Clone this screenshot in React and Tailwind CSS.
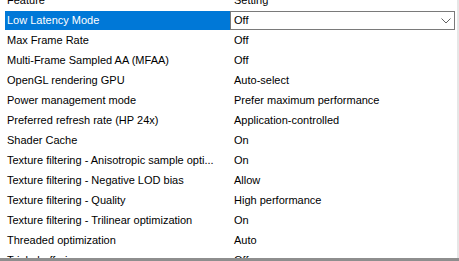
import React from "react";

const rows = [
  ["Max Frame Rate", "Off"],
  ["Multi-Frame Sampled AA (MFAA)", "Off"],
  ["OpenGL rendering GPU", "Auto-select"],
  ["Power management mode", "Prefer maximum performance"],
  ["Preferred refresh rate (HP 24x)", "Application-controlled"],
  ["Shader Cache", "On"],
  ["Texture filtering - Anisotropic sample opti...", "On"],
  ["Texture filtering - Negative LOD bias", "Allow"],
  ["Texture filtering - Quality", "High performance"],
  ["Texture filtering - Trilinear optimization", "On"],
  ["Threaded optimization", "Auto"],
  ["Triple buffering", "Off"],
];

export default function App() {
  return (
    <div
      className="relative w-[459px] h-[261px] overflow-hidden bg-white text-[11px] text-black"
      style={{ fontFamily: '"Liberation Sans", Arial, sans-serif' }}
    >
      <div className="flex h-[258px]">
        <div className="flex flex-col w-[457px] -mt-[10px] overflow-hidden">
          <div className="flex h-[20px] items-center shrink-0">
            <div className="w-[229px] pl-[7px]">Feature</div>
            <div className="pl-[5px]">Setting</div>
          </div>
          <div className="flex h-[19px] shrink-0 mt-[1px]">
            <div className="w-[225px] ml-[5px] bg-[#0078d7] text-white flex items-center pl-[2px]">
              Low Latency Mode
            </div>
            <div className="flex-1 mr-[2px] border border-[#7a7a7a] flex items-center justify-between pl-[3px] pr-[3px]">
              <span>Off</span>
              <svg width="10" height="6" viewBox="0 0 10 6" fill="none">
                <path d="M0.5 0.5 L5 5 L9.5 0.5" stroke="#606060" strokeWidth="1" />
              </svg>
            </div>
          </div>
          {rows.map(([f, s]) => (
            <div key={f} className="flex h-[20px] items-center shrink-0">
              <div className="w-[229px] pl-[7px] whitespace-nowrap overflow-hidden">{f}</div>
              <div className="pl-[5px] whitespace-nowrap">{s}</div>
            </div>
          ))}
        </div>
        <div className="w-[2px] bg-[#e6e6e6]" />
      </div>
      <div className="h-[3px] bg-[#8e8e8e]" />
    </div>
  );
}
